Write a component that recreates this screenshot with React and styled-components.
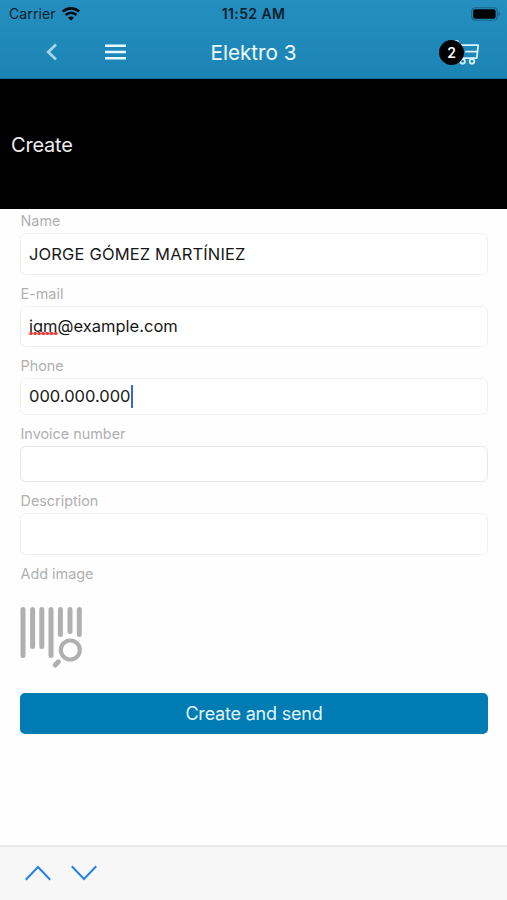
import React from "react";
import styled, { createGlobalStyle } from "styled-components";

const GlobalStyle = createGlobalStyle`
  * { box-sizing: border-box; }
  body { margin: 0; background: #fff; font-family: Inter, "Liberation Sans", sans-serif; }
`;

const Screen = styled.div`
  display: flex;
  flex-direction: column;
  width: 507px;
  height: 900px;
  overflow: hidden;
  background: #fefefe;
`;

const Header = styled.header`
  flex: none;
  height: 79px;
  background: linear-gradient(#258fbf, #1b84b5);
  border-bottom: 1px solid #126b94;
`;

const StatusBar = styled.div`
  display: grid;
  grid-template-columns: 1fr auto 1fr;
  align-items: center;
  height: 27px;
  padding: 0 6px;
  color: #06202d;
  font-size: 14px;
`;

const Carrier = styled.div`
  display: flex;
  align-items: center;
  gap: 6px;
  padding-left: 3px;
  letter-spacing: 0.1px;
`;

const Clock = styled.div`
  font-weight: 600;
  font-size: 14px;
  letter-spacing: 0.4px;
`;

const BatteryIcon = styled.svg`
  justify-self: end;
`;

const NavBar = styled.nav`
  display: grid;
  grid-template-columns: 1fr auto 1fr;
  align-items: center;
  height: 50px;
  padding: 0 27px;
`;

const NavActions = styled.div`
  display: flex;
  align-items: center;
  gap: 47px;
  padding-left: 19px;
`;

const Title = styled.h1`
  margin: 0;
  color: #f0fbff;
  font-size: 20.7px;
  font-weight: 400;
`;

const Cart = styled.div`
  display: flex;
  align-items: center;
  justify-self: end;
`;

const Badge = styled.span`
  z-index: 1;
  display: flex;
  align-items: center;
  justify-content: center;
  width: 25px;
  height: 25px;
  margin-right: -10px;
  border-radius: 50%;
  background: #000;
  color: #fff;
  font-size: 14px;
  font-weight: 600;
`;

const CartIcon = styled.svg`
  margin-top: 1px;
`;

const Banner = styled.section`
  display: flex;
  flex: none;
  align-items: center;
  height: 130px;
  padding: 1px 0 0 11px;
  background: #000;
  color: #ececec;
  font-size: 20px;
  letter-spacing: -0.2px;
`;

const Form = styled.main`
  display: flex;
  flex: 1;
  flex-direction: column;
  padding: 0 19px 0 20px;
`;

const Field = styled.div`
  margin-bottom: 7px;
`;

const Label = styled.div`
  height: 24px;
  padding-left: 0.5px;
  color: #b0b0b0;
  font-size: 14.4px;
  line-height: 23.5px;
`;

const Input = styled.div`
  display: flex;
  align-items: center;
  height: ${(p) => (p.$compact ? 36.5 : 41.5)}px;
  padding-left: 8px;
  border: 1px solid ${(p) => (p.$strong ? "#e9e9e9" : "#f0f0f0")};
  border-radius: 6px;
  background: #fff;
  color: #181818;
  font-size: 16.5px;
  letter-spacing: ${(p) => p.$spacing || 0}px;
`;

const Misspelled = styled.span`
  position: relative;

  &::after {
    content: "";
    position: absolute;
    left: 0;
    right: 0;
    bottom: 0;
    height: 4px;
    background: #fff radial-gradient(circle, #f0373a 1.5px, transparent 2.1px) 0 0 / 4.1px 3.4px repeat-x;
  }
`;

const Caret = styled.span`
  width: 2px;
  height: 23px;
  background: #3c64df;
`;

const ScanIcon = styled.svg`
  flex: none;
  margin-top: 13px;
`;

const Submit = styled.button`
  flex: none;
  height: 41px;
  margin: 24px 0 0;
  padding: 0;
  border: 0;
  border-radius: 5px;
  background: #007cb4;
  color: #e3f5fc;
  font: 400 18px Inter, "Liberation Sans", sans-serif;
  letter-spacing: -0.2px;
`;

const KeyboardBar = styled.footer`
  display: flex;
  flex: none;
  align-items: center;
  gap: 19.5px;
  height: 55px;
  padding: 0 0 2px 25px;
  border-top: 2px solid #e9e9e9;
  background: #f7f7f7;
`;

export default function App() {
  return (
    <>
      <GlobalStyle />
      <Screen>
        <Header>
          <StatusBar>
            <Carrier>
              Carrier
              <svg width="18" height="14" viewBox="0 0 18 14" fill="none" stroke="#020b10" strokeWidth="2.7">
                <path d="M.8 4.6C5.5 .2 12.5 .2 17.2 4.6M3.6 7.9C6.9 5 11.1 5 14.4 7.9" />
                <path d="M6 10.5C7.8 9.1 10.2 9.1 12 10.5L9 13.7Z" fill="#020b10" stroke="none" />
              </svg>
            </Carrier>
            <Clock>11:52 AM</Clock>
            <BatteryIcon width="30" height="14" viewBox="0 0 30 14">
              <rect x=".75" y=".75" width="25.5" height="12.5" rx="3.5" fill="none" stroke="#17658a" strokeWidth="1.2" />
              <rect x="2.2" y="2.2" width="22.4" height="9.6" rx="2" fill="#000" />
              <path d="M27.5 4.8Q29.3 5.5 29.3 7T27.5 9.2Z" fill="#17658a" />
            </BatteryIcon>
          </StatusBar>
          <NavBar>
            <NavActions>
              <svg width="12" height="18" viewBox="0 0 12 18" fill="none" stroke="#a8d8ed" strokeWidth="2.6">
                <path d="M10 1.5 2.2 9 10 16.5" />
              </svg>
              <svg width="21" height="16" viewBox="0 0 21 16" fill="#e9faff">
                <path d="M0 .5h21v2.6H0zM0 6.7h21v2.6H0zM0 12.9h21v2.6H0z" />
              </svg>
            </NavActions>
            <Title>Elektro 3</Title>
            <Cart>
              <Badge>2</Badge>
              <CartIcon width="26" height="26" viewBox="0 0 26 26" fill="none" stroke="#d8f5ff" strokeWidth="1.7" strokeLinecap="round" strokeLinejoin="round">
                <path d="M.5 1H3.5L6 5.2H24.2L22.8 18.2H7M12 11.7H23" />
                <circle cx="8.6" cy="21.4" r="2.3" />
                <circle cx="18" cy="21.4" r="2.3" />
              </CartIcon>
            </Cart>
          </NavBar>
        </Header>
        <Banner>Create</Banner>
        <Form>
          <Field>
            <Label>Name</Label>
            <Input $spacing={0.15}>JORGE GÓMEZ MARTÍNIEZ</Input>
          </Field>
          <Field>
            <Label>E-mail</Label>
            <Input><Misspelled>jgm</Misspelled>@example.com</Input>
          </Field>
          <Field>
            <Label>Phone</Label>
            <Input $compact>000.000.000<Caret /></Input>
          </Field>
          <Field>
            <Label>Invoice number</Label>
            <Input $compact $strong />
          </Field>
          <Field>
            <Label>Description</Label>
            <Input />
          </Field>
          <Label>Add image</Label>
          <ScanIcon width="63" height="70" viewBox="0 0 63 70" fill="none" stroke="#b0b0b0" strokeWidth="5" strokeLinecap="round">
            <path d="M3 10.5V56.5M12.6 10.5V47.5M21.8 10.5V47.5M31 10.5V56.5M40.4 10.5V35.5M50 10.5V32.5M59.3 10.5V35.5" />
            <circle cx="50.3" cy="51" r="9.5" strokeWidth="4.2" />
            <path d="M38.4 62.8 35.2 66" />
          </ScanIcon>
          <Submit>Create and send</Submit>
        </Form>
        <KeyboardBar>
          <svg width="26" height="16" viewBox="0 0 26 16" fill="none" stroke="#2482ee" strokeWidth="2">
            <path d="M.8 14.7 13 2 25.2 14.7" />
          </svg>
          <svg width="26" height="16" viewBox="0 0 26 16" fill="none" stroke="#2482ee" strokeWidth="2">
            <path d="M.8 1.3 13 14 25.2 1.3" />
          </svg>
        </KeyboardBar>
      </Screen>
    </>
  );
}
